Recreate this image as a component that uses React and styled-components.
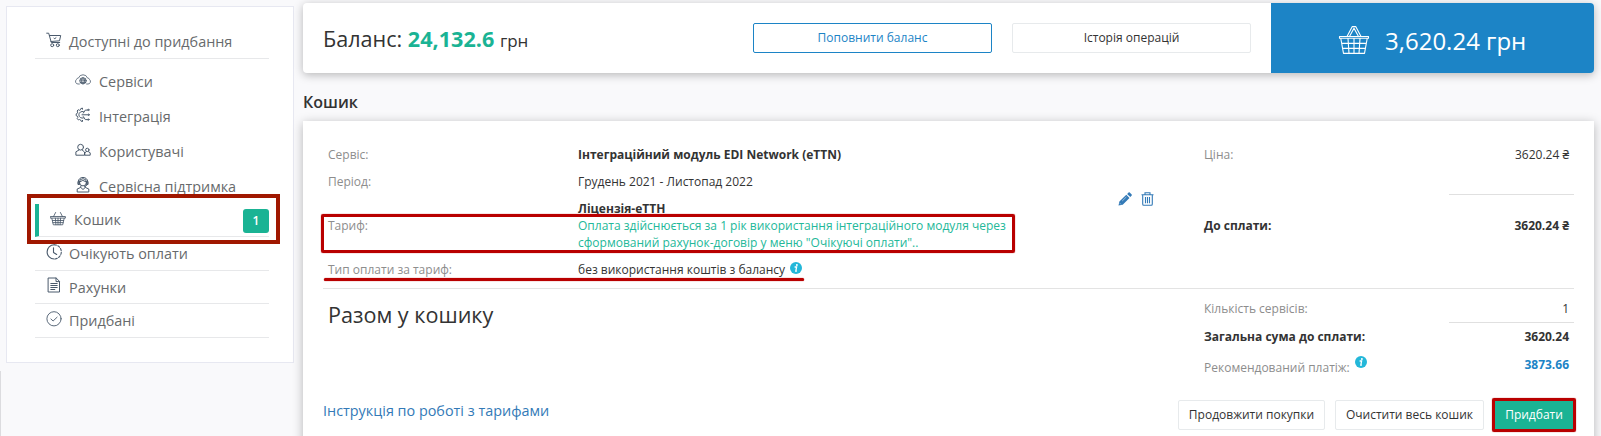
import React from "react";
import styled, { createGlobalStyle, css } from "styled-components";

const GlobalStyle = createGlobalStyle`
  * { box-sizing: border-box; }
  body {
    margin: 0;
    background: #f9f9fb;
    color: #333;
    font-family: "Open Sans", "Noto Sans", sans-serif;
    font-size: 12px;
    overflow: hidden;
  }
`;

const Page = styled.div`
  display: flex;
  height: 436px;
  overflow: hidden;
`;

/* ---------- sidebar ---------- */
const Sidebar = styled.aside`
  display: flex;
  flex-direction: column;
  width: 303px;
  flex: none;
`;
const SidebarTop = styled.div`
  height: 371px;
  padding: 6px 9px 0 6px;
`;
const SidebarRest = styled.div`
  flex: 1;
  border-left: 1px solid #dcdcdf;
`;
const MenuPanel = styled.nav`
  width: 288px;
  height: 357px;
  padding: 19px 24px 0 28px;
  border: 1px solid #e7e8f1;
  background: #fff;
`;
const MenuItem = styled.a`
  position: relative;
  display: flex;
  align-items: center;
  height: ${(p) => p.$h || 33}px;
  padding-left: 11px;
  padding-bottom: ${(p) => p.$bottom || 0}px;
  border-bottom: 1px solid #e7e8ea;
  color: #676a6c;
  font-size: 14.4px;
  svg {
    flex: none;
    margin: 0 7px ${(p) => (p.$lift ?? 4)}px 0;
  }
  ${(p) => p.$active && css`
    border-left: 4px solid #1ab394;
    svg { margin-right: 8px; }
  `}
`;
const SubMenu = styled.div`
  padding: 5px 0 0 40px;
`;
const SubItem = styled.a`
  display: flex;
  align-items: center;
  height: 35px;
  color: #676a6c;
  font-size: 14.4px;
  svg {
    flex: none;
    margin: 0 8px 4px 0;
  }
`;
const Badge = styled.span`
  width: 26px;
  height: 24px;
  margin: 3px 0 0 auto;
  border-radius: 3px;
  background: #1ab394;
  color: #fff;
  font-size: 12px;
  font-weight: 600;
  line-height: 23px;
  text-align: center;
`;
const MenuFrame = styled.span`
  position: absolute;
  left: -12px;
  top: -10px;
  width: 253px;
  height: 50px;
  border: 4px solid #a01700;
`;

/* ---------- main column ---------- */
const Main = styled.main`
  width: 1291px;
  flex: none;
  padding-top: 3px;
`;
const BalanceCard = styled.section`
  display: flex;
  height: 70px;
  border-radius: 4px;
  background: #fff;
  box-shadow: 0 2px 10px rgba(0, 0, 0, 0.27);
`;
const BalanceText = styled.div`
  width: 430px;
  padding-left: 20px;
  font-size: 21.6px;
  line-height: 71px;
  b { color: #1ab394; font-weight: 700; }
  small { font-size: 17px; }
`;
const BalanceActions = styled.div`
  display: flex;
  gap: 20px;
  width: 538px;
  padding: 20px 0 0 20px;
`;
const Button = styled.button`
  width: ${(p) => p.$w}px;
  height: 30px;
  padding: 0 0 1px;
  border: 1px solid ${(p) => ({ blue: "#1c84c6", green: "#1ab394" }[p.$tone] || "#e7eaec")};
  border-radius: 2px;
  background: ${(p) => (p.$tone === "green" ? "#1ab394" : "#fff")};
  color: ${(p) => ({ blue: "#1c84c6", green: "#fff" }[p.$tone] || "#333")};
  font: inherit;
  white-space: nowrap;
`;
const CartTotal = styled.div`
  display: flex;
  width: 323px;
  padding: 21px 0 0 67px;
  border-radius: 0 4px 4px 0;
  background: #1c84c6;
  color: #fff;
  font-size: 24px;
  line-height: 34px;
  svg { margin-top: 1px; }
  span { margin-left: 15px; }
`;
const Heading = styled.h1`
  height: 48px;
  margin: 0;
  font-size: 16px;
  font-weight: 600;
  line-height: 59px;
`;
const CartCard = styled.section`
  height: 340px;
  padding: 20px 20px 0;
  background: #fff;
  box-shadow: 0 2px 10px rgba(0, 0, 0, 0.27);
`;
const Service = styled.div`
  display: flex;
  height: 148px;
  border-bottom: 1px solid #e3e3e3;
`;
const Details = styled.div`
  width: 780px;
  padding-left: 5px;
`;
const Row = styled.div`
  position: relative;
  display: grid;
  grid-template-columns: 250px 430px;
  align-items: center;
  height: ${(p) => p.$h}px;
  padding-top: ${(p) => p.$top || 0}px;
  line-height: 17px;
`;
const Label = styled.span`
  color: #8d8d8d;
`;
const Strong = styled.b`
  font-weight: 700;
`;
const Note = styled.span`
  color: #23b899;
  white-space: nowrap;
`;
const NoteLabel = styled(Label)`
  align-self: start;
`;
const NoteFrame = styled.span`
  position: absolute;
  left: -7px;
  top: -3px;
  width: 694px;
  height: 39px;
  border: 3px solid #b90000;
  border-radius: 2px;
  box-shadow: 0 0 1px #b90000;
`;
const Underline = styled.span`
  position: absolute;
  left: -4px;
  bottom: 0;
  width: 480px;
  height: 3px;
  border-radius: 2px;
  background: #b90000;
  box-shadow: 0 0 1px #b90000;
`;
const InfoIcon = styled.svg`
  display: inline-block;
  margin: 0 0 0 5px;
  vertical-align: ${(p) => p.$lift}px;
`;
const Tools = styled.div`
  display: flex;
  gap: 9px;
  width: 101px;
  padding: 51px 0 0 15px;
`;
const Amounts = styled.div`
  width: 370px;
`;
const AmountRow = styled.div`
  display: flex;
  justify-content: space-between;
  align-items: center;
  height: ${(p) => p.$h}px;
  padding-right: 5px;
  padding-bottom: ${(p) => p.$bottom || 0}px;
  font-weight: ${(p) => (p.$bold ? 700 : 400)};
  line-height: 17px;
`;
const ShortLine = styled.div`
  width: 125px;
  height: 1px;
  margin: ${(p) => p.$m || "0"} 0 0 auto;
  background: #e0e0e0;
`;
const Recommended = styled.b`
  margin-bottom: 3px;
  color: #1c84c6;
`;
const Summary = styled.div`
  display: flex;
  justify-content: space-between;
  height: 111px;
`;
const SummaryTitle = styled.h2`
  margin: 0;
  padding-left: 5px;
  font-size: 21.6px;
  font-weight: 400;
  line-height: 51px;
`;
const SummaryAmounts = styled(Amounts)`
  padding-top: 7px;
`;
const Footer = styled.footer`
  position: relative;
  display: flex;
  gap: 10px;
`;
const GuideLink = styled.a`
  margin-right: auto;
  color: #337ab7;
  font-size: 14.4px;
  line-height: 21px;
`;
const BuyWrap = styled.span`
  position: relative;
`;
const BuyFrame = styled.span`
  position: absolute;
  left: -2px;
  top: -2px;
  width: 84px;
  height: 34px;
  border: 3px solid #b90000;
  border-radius: 2px;
  box-shadow: 0 0 1px #b90000;
`;

/* ---------- icons ---------- */
const Glyph = ({ children, size = 16, w = 1 }) => (
  <svg width={size} height={size} viewBox="0 0 16 16" fill="none" stroke="#4a5a6c" strokeWidth={w} strokeLinecap="round" strokeLinejoin="round">
    {children}
  </svg>
);
const CartIcon = () => (
  <Glyph>
    <path d="M.7 1.2h2l2.6 9.3h8.4M3.4 3.5h11.3l-1.2 5.3-8.5.7M8 6.2l.8.5 1.2-1" />
    <circle cx="6.2" cy="13.2" r="1.5" /><circle cx="11.8" cy="13.2" r="1.5" />
  </Glyph>
);
const CloudIcon = () => (
  <Glyph w={0.8}>
    <path d="M4.4 12H3a2.5 2.5 0 0 1-1.6-4.4c.3-1 1-1.6 2.2-1.7A4.6 4.4 0 0 1 12.4 5.9c1.2.1 1.9.7 2.2 1.7A2.5 2.5 0 0 1 13 12h-1.4" />
    <circle cx="8" cy="8.8" r="3.2" /><ellipse cx="8" cy="8.8" rx="1.4" ry="3.2" /><path d="M4.8 8.8h6.4M5.3 7.1h5.4M5.3 10.5h5.4" />
  </Glyph>
);
const IntegrationIcon = () => (
  <Glyph w={1}>
    <path d="M7.5 2.2V1.1L5.8 1.6l-.3 1.2-1 .5-1.3-.6L2.1 4l.6 1.1-.4 1.2-1.1.6v1.8l1.2.5.4 1.3-.6 1.1 1.3 1.4 1.1-.5 1.1.6.4 1.1 1.4.3v-1.1" />
    <path d="M8.4 4.6A3.4 3.4 0 1 0 8.4 11M7 7.8h5.3M8.3 6.1l2-3h2M8.3 9.6l2 3h2" />
    <circle cx="13.3" cy="2.9" r=".7" /><circle cx="13.5" cy="7.8" r=".7" /><circle cx="13.3" cy="12.6" r=".7" />
  </Glyph>
);
const UsersIcon = () => (
  <Glyph w={1}>
    <circle cx="5.6" cy="5.2" r="2.9" />
    <path d="M4 8L.9 9.8v3.4h8.6V10L7.2 8" />
    <circle cx="12.3" cy="7.9" r="1.7" /><path d="M11.3 9.7l-1.5 1.1v2.4h5.4v-2.4l-1.7-1.1" />
  </Glyph>
);
const SupportIcon = () => (
  <Glyph w={1}>
    <circle cx="8" cy="5.3" r="3.6" /><path d="M3.3 6.8V4.6a4.7 4.2 0 0 1 9.4 0v2.2M3 5v2.5h1.6V5zM11.4 5v2.5H13V5zM12 8L9.5 9.7M4.8 4.9l3-1.5 3.4 1.5M5.8 9.2v1.2L2.2 12v3h11.6v-3l-3.6-1.6V9.2M6 10.7l2 1.8 2-1.8" />
  </Glyph>
);
const BasketIcon = () => (
  <Glyph>
    <path d="M.6 5.5h14.8v1.6H.6zM1.8 7.2l1.5 6.6h9.4l1.5-6.6M2.4 9.5h11.2M2.9 11.6h10.2M5.4 7.2l.5 6.5M8 7.2v6.5M10.6 7.2l-.5 6.5M3.6 5.4l2-3.9M12.4 5.4l-2-3.9" strokeWidth=".85" />
  </Glyph>
);
const ClockIcon = () => (
  <Glyph w={1.1}>
    <path d="M8.2.8a7.1 7.1 0 1 0 0 14.2" /><path d="M8.2.8a7.1 7.1 0 0 1 0 14.2" strokeDasharray="2.2 1.6" /><path d="M7.5 3.8v4.7l3.2 2" />
  </Glyph>
);
const DocIcon = () => (
  <Glyph>
    <path d="M2.5 1h7.7l3.3 3.4V15h-11zM10 1v3.6h3.4M4.8 6.5h6.4M4.8 8.5h6.4M4.8 10.5h6.4M4.8 12.5h4" />
  </Glyph>
);
const CheckIcon = () => (
  <Glyph w={0.9}>
    <circle cx="8" cy="7.8" r="7.1" /><path d="M4.9 8l2.2 2 4-3.8" />
  </Glyph>
);
const LargeBasketIcon = () => (
  <svg width="32" height="30" viewBox="0 0 32 30" fill="none" stroke="#fff" strokeWidth="1.1" strokeLinejoin="round">
    <path d="M1.5 11.5h29v1.8h-29zM2.8 13.5l2.7 14.9h21l2.7-14.9M4 18.4h24M4.8 23.4h22.4M10 13.5l1 14.9M16 13.5v14.9M22 13.5l-1 14.9" />
    <path d="M9 11.5L14.3 1.6h3.4L23 11.5M11.2 12L16 3.2l4.8 8.8" />
  </svg>
);
const PencilIcon = () => (
  <svg width="14" height="14" viewBox="0 0 14 14" fill="#337ab7">
    <path d="M.5 13.6l.9-4.2 6.9-6.7 3.2 3.2-6.8 6.8zM9.1 1.9L10.6.5c.4-.3.8-.3 1.1 0l2 2c.3.4.3.8 0 1.1l-1.4 1.5z" />
    <path d="M1.8 11.2l1.2 1.2M4.2 9l4.2-4.1" stroke="#fff" strokeWidth=".5" />
  </svg>
);
const TrashIcon = () => (
  <svg width="13" height="14" viewBox="0 0 13 14" fill="none" stroke="#337ab7" strokeWidth="1.1">
    <path d="M.5 2.7h12M4 2.6V.7h5v1.9M1.7 2.8v9.2c0 .8.4 1.3 1 1.3h7.6c.6 0 1-.5 1-1.3V2.8M4.5 5v6.2M6.5 5v6.2M8.5 5v6.2" />
  </svg>
);
const Info = ({ lift }) => (
  <InfoIcon $lift={lift} width="12" height="12" viewBox="0 0 12 12">
    <circle cx="6" cy="6" r="6" fill="#23b7d9" />
    <circle cx="6.9" cy="2.9" r="1" fill="#fff" />
    <path d="M4.6 5h2L5.8 9.1h1.1" fill="none" stroke="#fff" strokeWidth="1.3" />
  </InfoIcon>
);

export default function App() {
  return (
    <>
      <GlobalStyle />
      <Page>
        <Sidebar>
          <SidebarTop>
            <MenuPanel>
              <MenuItem $bottom={2} $lift={2}><CartIcon />Доступні до придбання</MenuItem>
              <SubMenu>
                <SubItem><CloudIcon />Сервіси</SubItem>
                <SubItem><IntegrationIcon />Інтеграція</SubItem>
                <SubItem><UsersIcon />Користувачі</SubItem>
                <SubItem><SupportIcon />Сервісна підтримка</SubItem>
              </SubMenu>
              <MenuItem $active $bottom={2} $lift={0}>
                <BasketIcon />Кошик<Badge>1</Badge>
                <MenuFrame />
              </MenuItem>
              <MenuItem $h={34}><ClockIcon />Очікують оплати</MenuItem>
              <MenuItem><DocIcon />Рахунки</MenuItem>
              <MenuItem $h={34}><CheckIcon />Придбані</MenuItem>
            </MenuPanel>
          </SidebarTop>
          <SidebarRest />
        </Sidebar>
        <Main>
          <BalanceCard>
            <BalanceText>Баланс: <b>24,132.6</b> <small>грн</small></BalanceText>
            <BalanceActions>
              <Button $w={239} $tone="blue">Поповнити баланс</Button>
              <Button $w={239}>Історія операцій</Button>
            </BalanceActions>
            <CartTotal><LargeBasketIcon /><span>3,620.24 грн</span></CartTotal>
          </BalanceCard>
          <Heading>Кошик</Heading>
          <CartCard>
            <Service>
              <Details>
                <Row $h={27}><Label>Сервіс:</Label><Strong>Інтеграційний модуль EDI Network (eTTN)</Strong></Row>
                <Row $h={27}><Label>Період:</Label><span>Грудень 2021 - Листопад 2022</span></Row>
                <Row $h={22} $top={4}><span /><Strong>Ліцензія-еТТН</Strong></Row>
                <Row $h={34}>
                  <NoteLabel>Тариф:</NoteLabel>
                  <Note>Оплата здійснюється за 1 рік використання інтеграційного модуля через<br />сформований рахунок-договір у меню "Очікуючі оплати"..</Note>
                  <NoteFrame />
                </Row>
                <Row $h={30} $top={6}>
                  <Label>Тип оплати за тариф:</Label>
                  <span>без використання коштів з балансу<Info lift={0} /></span>
                  <Underline />
                </Row>
              </Details>
              <Tools><PencilIcon /><TrashIcon /></Tools>
              <Amounts>
                <AmountRow $h={27}><Label>Ціна:</Label><span>3620.24 ₴</span></AmountRow>
                <ShortLine $m="26px" />
                <AmountRow $h={61} $bold><span>До сплати:</span><span>3620.24 ₴</span></AmountRow>
              </Amounts>
            </Service>
            <Summary>
              <SummaryTitle>Разом у кошику</SummaryTitle>
              <SummaryAmounts>
                <AmountRow $h={26} $bottom={2}><Label>Кількість сервісів:</Label><span>1</span></AmountRow>
                <ShortLine />
                <AmountRow $h={28} $bottom={2} $bold><span>Загальна сума до сплати:</span><span>3620.24</span></AmountRow>
                <AmountRow $h={30}><Label>Рекомендований платіж:<Info lift={4} /></Label><Recommended>3873.66</Recommended></AmountRow>
              </SummaryAmounts>
            </Summary>
            <Footer>
              <GuideLink>Інструкція по роботі з тарифами</GuideLink>
              <Button $w={147}>Продовжити покупки</Button>
              <Button $w={149}>Очистити весь кошик</Button>
              <BuyWrap><Button $w={80} $tone="green">Придбати</Button><BuyFrame /></BuyWrap>
            </Footer>
          </CartCard>
        </Main>
      </Page>
    </>
  );
}
